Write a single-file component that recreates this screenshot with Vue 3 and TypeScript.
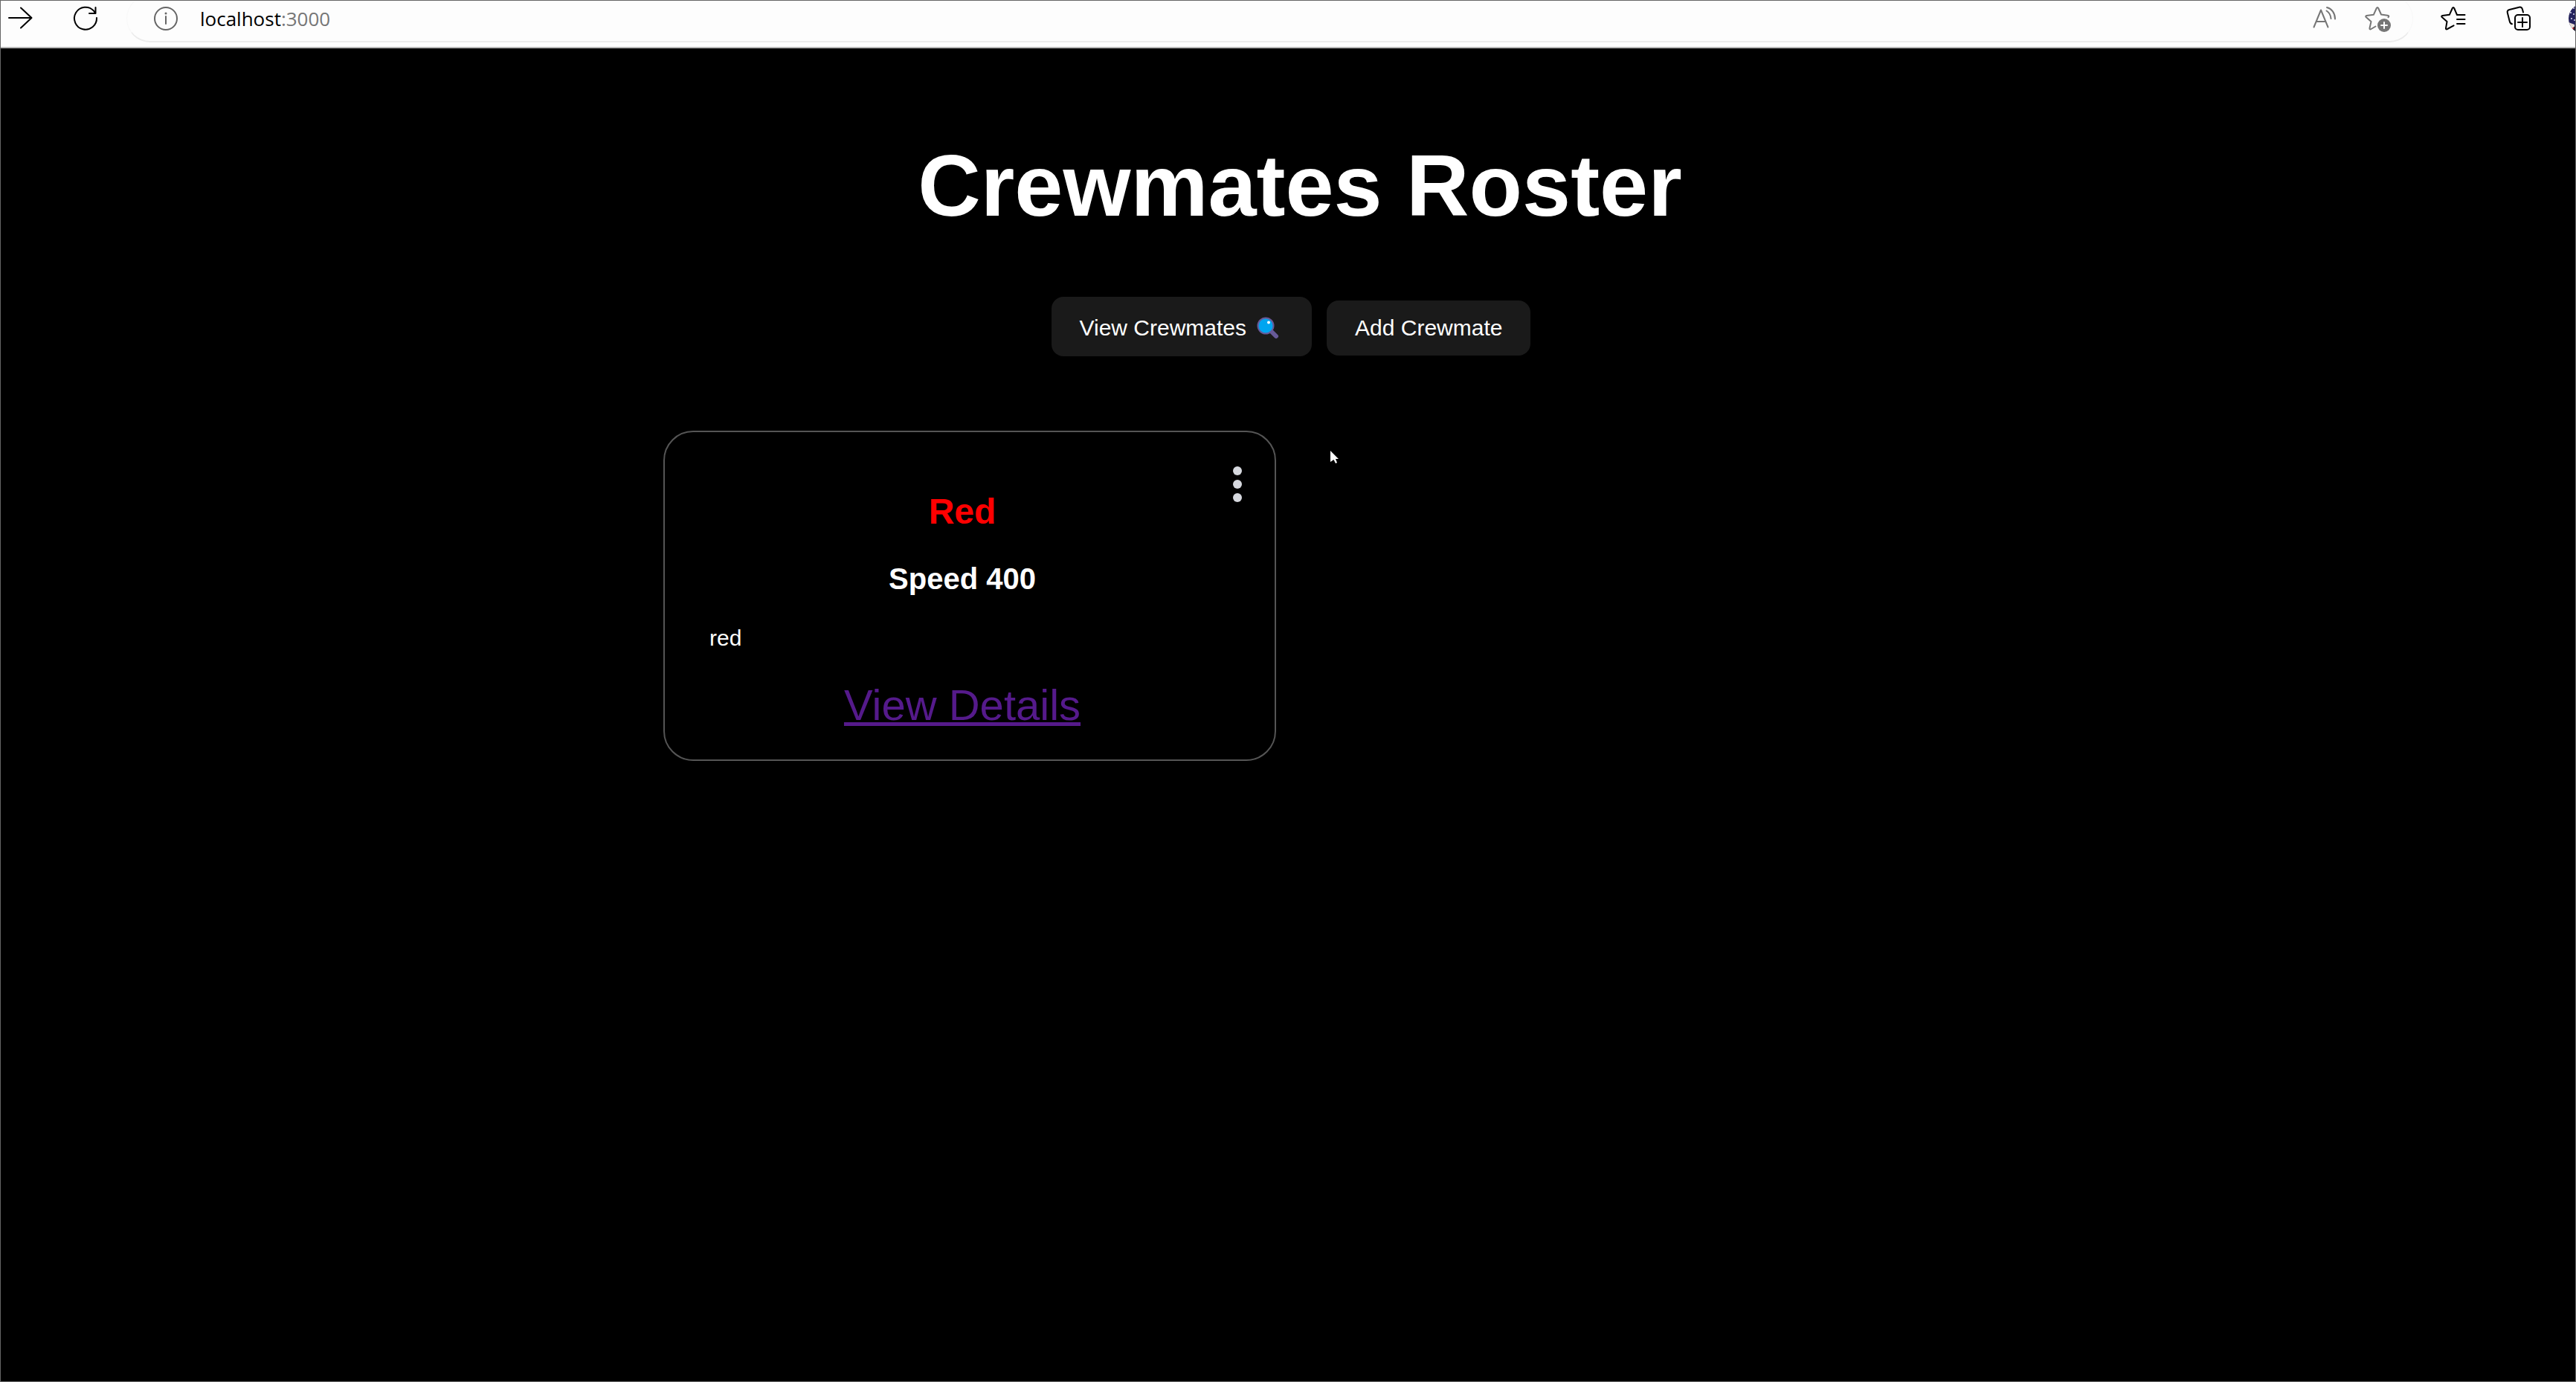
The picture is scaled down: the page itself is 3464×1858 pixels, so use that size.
<script setup lang="ts">
interface Crewmate {
  id: number
  name: string
  speed: number
  color: string
}

const crewmates: Crewmate[] = [{ id: 1, name: 'Red', speed: 400, color: 'red' }]
</script>

<template>
  <div class="window">
    <header class="toolbar">
      <button class="icon-button" type="button" aria-label="Forward">
        <svg viewBox="0 0 48 48" stroke="#000" stroke-width="2">
          <path d="M9 23H39M25 9.5L39.5 23L25 36.500" />
        </svg>
      </button>
      <button class="icon-button reload" type="button" aria-label="Refresh">
        <svg viewBox="0 0 48 48" stroke="#000" stroke-width="2">
          <path d="M39 23A15 15 0 1 1 35 13.500L37 16.500M37.500 9V17H29" />
        </svg>
      </button>
      <div class="address">
        <button class="icon-button" type="button" aria-label="View site information">
          <svg viewBox="0 0 48 48" stroke="#666" stroke-width="2">
            <circle cx="24" cy="24" r="15" />
            <path d="M24 21V31" />
            <circle cx="24" cy="17" r="1.5" fill="#666" stroke="none" />
          </svg>
        </button>
        <div class="url" role="textbox" aria-label="Address" tabindex="0">localhost<span class="port">:3000</span></div>
        <button class="icon-button" type="button" aria-label="Read aloud">
          <svg viewBox="0 0 48 48" stroke="#767676" stroke-width="2">
            <path d="M12.5 35.5L22 12.5L31.5 35.5M16 28H28M29.5 13.5C33 15.5 35 19 35.5 24M30 9C36.500 10.5 41 16.5 41 24.5" />
          </svg>
        </button>
        <button class="icon-button favourite" type="button" aria-label="Add to favorites">
          <svg viewBox="0 0 48 48" stroke="#767676" stroke-width="2">
            <path d="M21.5 34.5L15.5 38C14 39 13.3 38 13.5 36.8L15.5 28L8.700 22C7.8 21 8.3 20.2 9.5 20L18.8 18.8L22.8 10C23.5 8.7 24.5 8.7 25.2 10L29 18.5L37.5 19.8C39.5 20.2 40 21 38.5 22.3" />
            <circle cx="33" cy="33" r="9" fill="#767676" stroke="none" />
            <path d="M29 33H37M33 29V37" stroke="#fff" />
          </svg>
        </button>
      </div>
      <button class="icon-button" type="button" aria-label="Favorites">
        <svg viewBox="0 0 48 48" stroke="#000" stroke-width="2">
          <path d="M24.5 33.3L16 38C14.5 39 13.8 38 14 36.8L15.5 28L8.7 22C7.8 21 8.3 20.2 9.5 20L18.8 18.8L22.8 10C23.5 8.7 24.5 8.7 25.2 10L29 19H39.5M29 25H39.5M29 31H39.5" />
        </svg>
      </button>
      <button class="icon-button collections" type="button" aria-label="Collections">
        <svg viewBox="0 0 48 48" stroke="#000" stroke-width="2">
          <rect x="19" y="19" width="20" height="20" rx="4" />
          <path d="M29 23V35M23 29H35M30 15.5L28.8 11C28 9 26.500 8.2 24.5 8.7L11.5 12C9.3 12.6 8.3 14 8.8 16L11.7 27.5C12.3 30 13.3 31.2 15 31.3" />
        </svg>
      </button>
      <div class="profile">
        <svg viewBox="0 0 40 40" role="img" aria-label="Profile">
          <defs>
            <clipPath id="profile-circle"><circle cx="20" cy="20" r="20" /></clipPath>
          </defs>
          <g clip-path="url(#profile-circle)">
            <rect width="40" height="40" fill="#25235c" />
            <path d="M0 25L8 28V40H0Z" fill="#e6dcd5" />
            <path d="M6 32L9 30V40H6Z" fill="#221b2b" />
            <circle cx="6" cy="33" r="1" fill="#d22" />
            <g fill="#dcdcf0">
              <circle cx="7" cy="6" r="1" />
              <circle cx="3" cy="12" r="1" />
              <circle cx="7" cy="14" r="1" />
              <circle cx="4" cy="20" r="1" />
              <circle cx="8" cy="22" r="1" />
            </g>
          </g>
        </svg>
      </div>
    </header>

    <main class="page">
      <h1>Crewmates Roster</h1>
      <nav class="actions">
        <button class="action view" type="button">
          <span>View Crewmates</span>
          <svg class="magnifier" viewBox="0 0 30 30" aria-hidden="true">
            <path d="M20 20L26 26" stroke="#675a98" stroke-width="6" stroke-linecap="round" />
            <circle cx="12" cy="12" r="10.5" fill="#00a5f0" stroke="#675a98" stroke-width="2" />
            <circle cx="16" cy="7.5" r="2" fill="#fff" />
          </svg>
        </button>
        <button class="action" type="button">Add Crewmate</button>
      </nav>

      <section class="roster">
        <article v-for="mate in crewmates" :key="mate.id" class="card">
          <div class="details">
            <h2 :style="{ color: mate.color }">{{ mate.name }}</h2>
            <h3>Speed {{ mate.speed }}</h3>
            <p>{{ mate.color }}</p>
            <a href="#details">View Details</a>
          </div>
          <button class="more" type="button" aria-label="Edit crewmate">
            <svg viewBox="0 0 60 60" fill="#d6d8de">
              <circle cx="30" cy="12" r="6" />
              <circle cx="30" cy="30" r="6" />
              <circle cx="30" cy="48" r="6" />
            </svg>
          </button>
        </article>
      </section>
    </main>

    <svg class="pointer" viewBox="0 0 11 17" aria-hidden="true">
      <path d="M0 0L11 11H7L9 16L7 17L4.5 12L0 15Z" fill="#fff" />
    </svg>
  </div>
</template>

<style>
body {
  margin: 0;
  background: #000;
}
</style>

<style scoped>
.window {
  position: relative;
  box-sizing: border-box;
  min-height: 100vh;
  border: 1px solid #666;
  overflow: hidden;
  background: #000;
  color: #fff;
  font-family: "Liberation Sans", Arial, sans-serif;
  font-size: 30px;
  line-height: 34px;
}

.toolbar {
  display: flex;
  align-items: flex-start;
  height: 62px;
  padding-left: 2px;
  overflow: hidden;
  background: #fdfdfd;
  border-bottom: 2px solid #b8b8b8;
}

button {
  margin: 0;
  border: 0;
  padding: 0;
  color: inherit;
  background: none;
  font: inherit;
  cursor: pointer;
}

.icon-button {
  flex: none;
  width: 48px;
  height: 48px;
}

.icon-button svg {
  display: block;
  width: 48px;
  height: 48px;
  fill: none;
  stroke-linecap: round;
  stroke-linejoin: round;
}

.reload {
  margin-left: 40px;
}

.address {
  box-sizing: border-box;
  display: flex;
  flex: 1;
  align-items: center;
  height: 64px;
  margin: -8px 30px 0 31px;
  padding: 0 23px 0 28px;
  border: 1px solid #f8f8f8;
  border-bottom: 2px solid #ebebeb;
  border-radius: 32px;
}

.url {
  flex: 1;
  margin-left: 22px;
  color: #000;
  font-family: "Open Sans", "Noto Sans", sans-serif;
  font-size: 26px;
}

.port {
  color: #767676;
}

.favourite {
  margin-left: 26px;
}

.collections {
  margin-left: 40px;
}

.profile {
  flex: none;
  width: 9px;
  height: 40px;
  margin: 4px 0 0 43px;
}

.profile svg {
  display: block;
  width: 40px;
  height: 40px;
}

.page {
  max-width: 1680px;
  margin: 0 auto;
  padding: 120px 20px;
}

h1,
h2,
h3,
p {
  margin: 0;
}

h1 {
  padding-left: 32px;
  font-size: 117px;
  line-height: 130px;
  text-align: center;
}

.actions {
  display: flex;
  align-items: baseline;
  justify-content: center;
  gap: 20px;
  margin-top: 84px;
  padding-left: 8px;
}

.action {
  padding: 20px 38px;
  border-radius: 16px;
  background: #1a1a1a;
}

.view {
  display: flex;
  align-items: center;
  gap: 14px;
  padding: 25px 44px 21px 38px;
}

.magnifier {
  width: 30px;
  height: 30px;
  fill: none;
}

.roster {
  display: grid;
  grid-template-columns: repeat(2, 1fr);
  gap: 32px;
  margin-top: 100px;
}

.card {
  display: flex;
  align-items: flex-start;
  padding: 0 20px 0 60px;
  border: 2px solid #555;
  border-radius: 40px;
}

.details {
  display: flex;
  flex: 1;
  flex-direction: column;
  align-items: center;
  gap: 40px;
  padding: 80px 0 40px;
}

h2 {
  font-size: 48px;
  line-height: 54px;
}

h3 {
  font-size: 40px;
  line-height: 46px;
}

p {
  align-self: flex-start;
}

a {
  color: #551a8b;
  font-size: 58px;
  line-height: 66px;
  text-decoration-thickness: 5px;
}

.more {
  width: 60px;
  height: 60px;
  margin-top: 40px;
}

.more svg {
  display: block;
}

.pointer {
  position: absolute;
  top: 605px;
  left: calc(50% + 57px);
  width: 11px;
  height: 17px;
}
</style>
